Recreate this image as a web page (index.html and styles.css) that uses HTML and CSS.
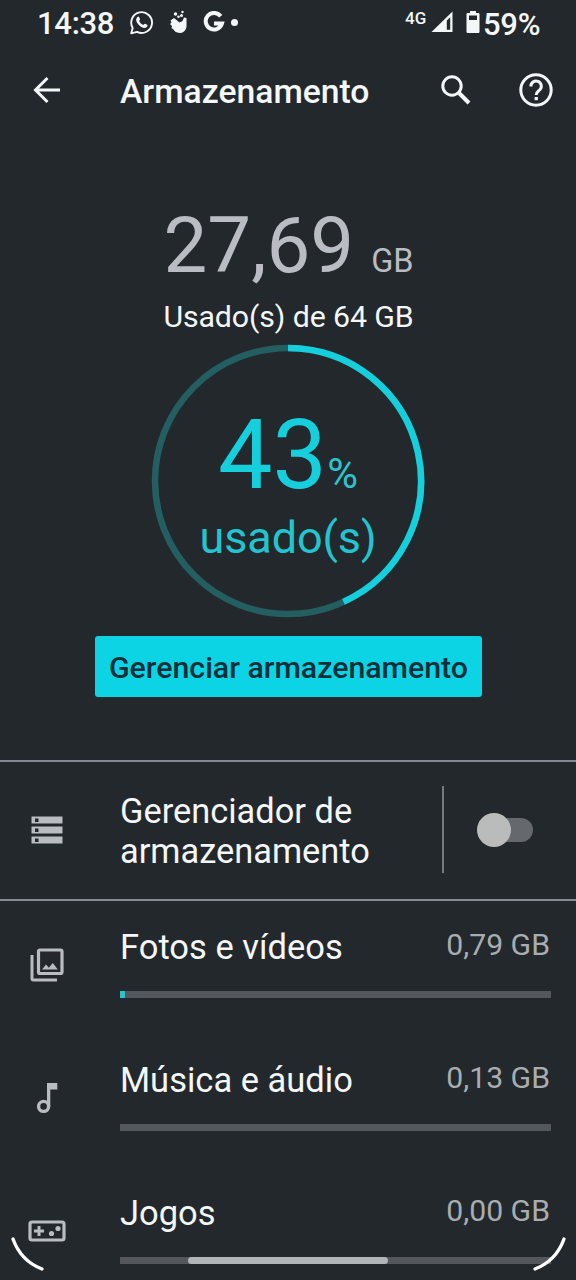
FILE: index.html
```html
<!DOCTYPE html>
<html lang="pt-BR">
<head>
<meta charset="utf-8">
<title>Armazenamento</title>
<link rel="stylesheet" href="styles.css">
</head>
<body>
<div class="screen">
  <header class="status">
    <span class="clock">14:38</span>
    <svg class="i-whats" width="26" height="26" viewBox="0 0 26 26"><path d="M2.2 23.3l1.5-5.4A10.4 10.4 0 1 1 8 21.9z" fill="none" stroke="#f4f7f8" stroke-width="1.9" stroke-linejoin="round"/><path d="M8.2 7.2c.8-.9 1.7-.7 2 .1l.8 1.9c.2.6-.6 1.200-.9 1.700.9 1.900 2.300 3.200 4.200 4 .6-.5 1.200-1.500 1.800-1.200l2 1c.7.3.5 1.400 0 2-2.300 2.300-5.400.9-7.700-1.300-2.500-2.400-4.500-5.600-2.200-8.200z" fill="#f4f7f8"/></svg>
    <svg class="i-hand" width="20" height="24" viewBox="0 0 20 24"><path d="M1.500 10.500L5 8 10.500 12.500 13.500 11 15 7.500 17.500 8 17.500 17Q16 23 10.500 23 6 22.500 4.500 19.500L2.500 18 3 16 1 14 2.500 12.500z" fill="#f4f7f8"/><circle cx="6.500" cy="4" r="1.700" fill="#f4f7f8"/><circle cx="13.500" cy="2" r="1.200" fill="#f4f7f8"/><circle cx="9.500" cy="6.800" r="1.300" fill="#f4f7f8"/><circle cx="12.500" cy="5.500" r="1.500" fill="#f4f7f8"/></svg>
    <svg class="i-g" width="24" height="24" viewBox="0 0 24 24"><path d="M18.700 5.300A8.300 8.300 0 1 0 20 12.500H12" fill="none" stroke="#f4f7f8" stroke-width="4"/></svg>
    <span class="dot"></span>
    <span class="net">4G</span>
    <svg class="i-signal" width="22" height="22" viewBox="0 0 22 22"><path d="M.5 21L21.500.5V21z" fill="#f4f7f8"/><path d="M15.800 9.500l3.400-3.300v12.600h-3.400z" fill="#23282d"/></svg>
    <svg class="i-batt" width="14" height="22" viewBox="0 0 14 22"><path d="M4 0h6v2h2.300q1.200 0 1.200 1.200v17.600q0 1.200-1.200 1.200H1.700Q.5 22 .5 20.800V3.200Q.5 2 1.700 2H4z" fill="#f4f7f8"/><path d="M3 4.500h8V9H3z" fill="#23282d"/></svg>
    <span class="pct">59%</span>
  </header>

  <nav class="appbar">
    <svg class="i-back" width="28" height="28" viewBox="0 0 28 28"><path d="M27 14H2.500M14.500 2L2.500 14l12 12" fill="none" stroke="#f4f7f8" stroke-width="3"/></svg>
    <h1 class="title">Armazenamento</h1>
    <svg class="i-search" width="30" height="30" viewBox="0 0 30 30"><circle cx="11" cy="11" r="9.200" fill="none" stroke="#f4f7f8" stroke-width="3"/><path d="M17.500 17.500L28 28" stroke="#f4f7f8" stroke-width="4"/></svg>
    <svg class="i-help" width="36" height="36" viewBox="0 0 36 36"><circle cx="18" cy="18" r="15.200" fill="none" stroke="#f4f7f8" stroke-width="3"/><path d="M12.900 14.500a5.200 5.200 0 1 1 8.700 3.500c-1.900 1.700-3.400 2.500-3.400 5" fill="none" stroke="#f4f7f8" stroke-width="3"/><path d="M16.600 25h3.300v3.200h-3.300z" fill="#f4f7f8"/></svg>
  </nav>

  <section class="summary">
    <div class="used"><span class="used-num">27,69</span><span class="used-unit">GB</span></div>
    <div class="total">Usado(s) de 64 GB</div>
    <div class="ring">
      <svg class="ring-svg" width="274" height="274" viewBox="0 0 274 274"><circle cx="137" cy="137" r="133" fill="none" stroke="#235f61" stroke-width="6.500"/><path d="M137 4A133 133 0 0 1 192.500 257.900" fill="none" stroke="#16cfdd" stroke-width="6.500"/></svg>
      <div class="ring-value"><span class="ring-num">43</span><span class="ring-pct">%</span></div>
      <div class="ring-label">usado(s)</div>
    </div>
    <button class="manage">Gerenciar armazenamento</button>
  </section>

  <section class="manager">
    <div class="icon"><svg width="32" height="28" viewBox="0 0 32 28"><path d="M.5.500h31v7H.500zM.500 10.500h31v7H.500zM.500 20.500h31v7H.500z" fill="#b9bcc0"/><path d="M4 2.500h3.500V6H4zM4 12.500h3.500V16H4zM4 22.500h3.500V26H4z" fill="#23282d"/></svg></div>
    <div class="manager-text">Gerenciador de<br>armazenamento</div>
    <div class="divider"></div>
    <div class="switch"><span class="thumb"></span></div>
  </section>

  <main class="list">
    <article class="row">
      <div class="icon"><svg width="34" height="34" viewBox="0 0 34 34"><rect x="8.500" y="2" width="23.500" height="23.500" rx="1.500" fill="none" stroke="#b9bcc0" stroke-width="3.200"/><path d="M2 7v23.500q0 1.500 1.500 1.500H27" fill="none" stroke="#b9bcc0" stroke-width="3"/><path d="M12 21.500l4-5 2.800 3.200 4-4.700 5 6.500z" fill="#b9bcc0"/></svg></div>
      <div class="row-body"><div class="row-head"><span class="name">Fotos e vídeos</span><span class="size">0,79 GB</span></div><div class="bar"><div class="fill" style="width:1.2%"></div></div></div>
    </article>
    <article class="row">
      <div class="icon"><svg width="22" height="32" viewBox="0 0 22 32"><circle cx="7.600" cy="24.400" r="5" fill="none" stroke="#b9bcc0" stroke-width="3.400"/><path d="M11 1h10.300v6.500h-7V25H11z" fill="#b9bcc0"/></svg></div>
      <div class="row-body"><div class="row-head"><span class="name">Música e áudio</span><span class="size">0,13 GB</span></div><div class="bar"></div></div>
    </article>
    <article class="row">
      <div class="icon"><svg width="38" height="22" viewBox="0 0 38 22"><rect x="2" y="2" width="34" height="18" rx="2" fill="none" stroke="#b9bcc0" stroke-width="3.200"/><path d="M6 11h10M11 6v10" stroke="#b9bcc0" stroke-width="3"/><circle cx="23.500" cy="13.500" r="2.600" fill="#b9bcc0"/><circle cx="30" cy="8.500" r="2.600" fill="#b9bcc0"/></svg></div>
      <div class="row-body"><div class="row-head"><span class="name">Jogos</span><span class="size">0,00 GB</span></div><div class="bar"></div></div>
    </article>
  </main>

  <div class="handle"></div>
  <svg class="corner corner-left" width="36" height="36" viewBox="0 0 36 36"><path d="M3 3Q11 25 32 33" fill="none" stroke="#fff" stroke-width="3.400" stroke-linecap="round"/></svg>
  <svg class="corner corner-right" width="36" height="36" viewBox="0 0 36 36"><path d="M33 3Q25 25 4 33" fill="none" stroke="#fff" stroke-width="3.400" stroke-linecap="round"/></svg>
</div>
</body>
</html>
```
FILE: styles.css
```css
* { box-sizing: border-box; }
body { margin: 0; background: #23282d; font-family: Roboto, "Liberation Sans", sans-serif; color: #f4f7f8; }
svg { display: block; flex: none; }
.screen { position: relative; width: 576px; height: 1280px; overflow: hidden; display: flex; flex-direction: column; }

.status { height: 48px; flex: none; display: flex; align-items: center; padding-left: 37px; }
.clock { width: 92px; font-size: 31px; font-weight: 500; line-height: 46px; letter-spacing: -.3px; }
.i-whats { margin-top: -3px; }
.i-hand { margin: -5px 0 0 14px; }
.i-g { margin: -3px 0 0 13px; }
.dot { width: 7px; height: 7px; margin: -4px 0 0 5px; border-radius: 50%; background: #f4f7f8; }
.net { width: 26px; margin: -12px 0 0 167px; font-size: 17px; font-weight: 500; line-height: 20px; }
.i-signal { margin-top: -4px; }
.i-batt { margin: -4px 0 0 13px; }
.pct { margin: 1px 0 0 3px; font-size: 31px; font-weight: 500; line-height: 46px; letter-spacing: -.3px; }

.appbar { height: 86px; flex: none; display: flex; align-items: center; padding: 0 22px 0 33px; }
.i-back { margin-top: -2px; }
.title { flex: 1; margin: 2px 0 0 59px; font-size: 33.700px; font-weight: 500; line-height: 40px; }
.i-search { margin-top: -3px; }
.i-help { margin: -2px 0 0 47px; }

.summary { height: 626px; flex: none; display: flex; flex-direction: column; align-items: center; }
.used { height: 94px; margin: 65px 0 0 1px; display: flex; align-items: baseline; line-height: 94px; color: #b9bcc2; }
.used-num { font-size: 78px; }
.used-unit { margin-left: 17px; font-size: 32.500px; }
.total { height: 40px; margin: 3px 0 0 1px; font-size: 30.300px; letter-spacing: -.1px; line-height: 41px; }
.ring { position: relative; width: 274px; height: 274px; margin-top: 8px; display: flex; flex-direction: column; align-items: center; color: #16cfdd; }
.ring-svg { position: absolute; left: 0; top: 0; }
.ring-value { height: 110px; margin-top: 56px; display: flex; align-items: baseline; line-height: 110px; }
.ring-num { font-size: 97px; }
.ring-pct { font-size: 42px; color: #2cc3cc; }
.ring-label { height: 56px; font-size: 45px; line-height: 56px; letter-spacing: -.1px; color: #22c5cf; }
.manage { width: 387px; height: 61px; margin: 18px 0 0 1px; padding: 2px 0 0; border: 0; border-radius: 3px; background: #0dd4e4; color: #063039; font: 500 30.300px/59px Roboto, "Liberation Sans", sans-serif; white-space: nowrap; }

.manager { height: 141px; flex: none; display: flex; align-items: center; padding-bottom: 2px; border-top: 2px solid #858a92; border-bottom: 2px solid #858a92; }
.icon { width: 94px; flex: none; display: flex; justify-content: center; }
.manager-text { width: 322px; margin: 2px 0 0 26px; font-size: 34.400px; line-height: 40px; white-space: nowrap; }
.divider { width: 2px; height: 87px; background: #757a7f; }
.switch { width: 50px; height: 24px; margin-left: 39px; border-radius: 12px; background: #65686d; display: flex; align-items: center; }
.thumb { width: 34px; height: 34px; flex: none; margin-left: -6px; border-radius: 50%; background: #b9bcba; }

.row { height: 133px; display: flex; }
.row .icon { height: 127px; align-items: center; }
.row-body { width: 431px; margin-left: 26px; }
.row-head { height: 90px; padding-top: 26px; display: flex; justify-content: space-between; }
.name { font-size: 34.500px; line-height: 40px; }
.size { padding-right: 1px; font-size: 30.200px; line-height: 36px; color: #a9adb0; }
.bar { height: 7px; background: #54585c; }
.fill { height: 7px; background: #31c2c8; }

.handle { position: absolute; left: 188px; top: 1257px; width: 200px; height: 7px; border-radius: 4px; background: #b2b5b8; }
.corner { position: absolute; top: 1236px; }
.corner-left { left: 10px; }
.corner-right { left: 531px; }
```
